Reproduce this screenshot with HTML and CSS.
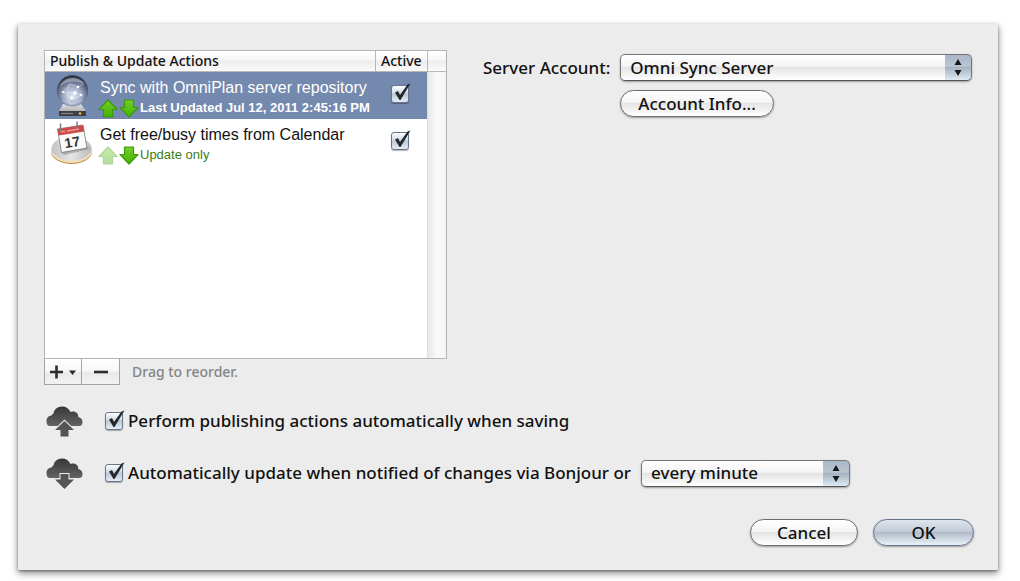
FILE: index.html
```html
<!DOCTYPE html>
<html lang="en">
<head>
<meta charset="utf-8">
<title>Publish &amp; Update Actions</title>
<link rel="stylesheet" href="styles.css">
</head>
<body>
<svg class="defs" width="0" height="0" aria-hidden="true">
  <defs>
    <linearGradient id="green" x1="0" y1="0" x2="0" y2="1"><stop offset="0" stop-color="#74d02a"/><stop offset="1" stop-color="#44b000"/></linearGradient>
    <linearGradient id="cloudfill" x1="0" y1="0" x2="0" y2="1"><stop offset="0" stop-color="#363636"/><stop offset="1" stop-color="#646464"/></linearGradient>
    <radialGradient id="globe" cx="0.5" cy="0.66" r="0.62"><stop offset="0" stop-color="#e2e8f4"/><stop offset="0.45" stop-color="#a3aec8"/><stop offset="0.8" stop-color="#59637e"/><stop offset="1" stop-color="#2b3242"/></radialGradient>
    <linearGradient id="metal" x1="0" y1="0" x2="0" y2="1"><stop offset="0" stop-color="#e0e0e0"/><stop offset="1" stop-color="#9a9a9a"/></linearGradient>
    <linearGradient id="plate" x1="0" y1="0" x2="1" y2="0"><stop offset="0" stop-color="#c4c4c6"/><stop offset="0.5" stop-color="#e4e4e6"/><stop offset="1" stop-color="#bcbcbc"/></linearGradient>
    <symbol id="up" viewBox="0 0 20 19"><path d="M10 1 L19 10.5 H14.5 V18 H5.5 V10.5 H1 Z" fill="url(#green)" stroke="#3a9a0a" stroke-width="1.2" stroke-linejoin="round"/></symbol>
    <symbol id="down" viewBox="0 0 20 19"><path d="M10 18 L19 8.5 H14.5 V1 H5.5 V8.5 H1 Z" fill="url(#green)" stroke="#3a9a0a" stroke-width="1.2" stroke-linejoin="round"/></symbol>
    <symbol id="tick" viewBox="0 0 20 20"><path d="M4 9.5 L7 8 L9 12 L16.5 1.5 L19.5 0.5 L9.5 17 H8.5 Z" fill="#26282c"/></symbol>
    <symbol id="arrows" viewBox="0 0 8 17"><path d="M4 0 L7.5 6 H0.5 Z M0.5 11 H7.5 L4 17 Z" fill="#16181c"/></symbol>
    <symbol id="cloud" viewBox="0 0 37 20"><path d="M4 20 C1.5 20 0.5 18 0.5 15 C0.5 12 2.5 9.8 5.5 9.6 C6 8.5 6.6 8 7.5 7.500 C8 3.500 11.500 0.5 16 0.5 C20 0.5 23 2.5 24.5 6 C29 4.5 32.5 7 32.3 11 C35 11.500 36.5 13.5 36.5 16 C36.5 18.5 35.5 20 33 20 Z" fill="url(#cloudfill)"/></symbol>
  </defs>
</svg>
<form class="dialog">
  <div class="columns">
    <section class="list">
      <table class="actions">
        <thead>
          <tr><th class="col-name">Publish &amp; Update Actions</th><th class="col-active">Active</th><th class="col-scroll"></th></tr>
        </thead>
        <tbody>
          <tr class="row selected">
            <td>
              <div class="action">
                <svg class="action-icon" viewBox="0 0 44 44" aria-hidden="true">
                  <path d="M14 30 H32 L37 37 V41.500 H10 V37 Z" fill="url(#metal)"/>
                  <path d="M10 37 H37 V42 H10 Z" fill="#3d3f43"/>
                  <path d="M12 39.500 H24" stroke="#888" stroke-width="1.2"/>
                  <circle cx="31" cy="39.5" r="1.3" fill="#ecc24b"/>
                  <circle cx="23.5" cy="17" r="15.7" fill="url(#globe)"/>
                  <path d="M10.500 13 C14 3 30 0 36 11 C28 6 18 6 10.500 13 Z" fill="#c5cbd6" opacity="0.55"/>
                  <g fill="none" stroke="#f2f5fc" stroke-width="0.5" opacity="0.8"><path d="M14 18 L21 10 L29 13 L34 10 M14 18 L26 19 L29 13 M26 19 L23 25 L14 18 M26 19 L33 21 L23 25 M13 26 Q23 33 33 26 M21 10 Q15 21 22 31"/></g>
                  <g fill="#fff"><circle cx="14" cy="18" r="1.1"/><circle cx="26" cy="19" r="1.7"/><circle cx="22.500" cy="24" r="1.500"/><circle cx="29" cy="13" r="1.300"/><circle cx="32" cy="21" r="1.300"/></g>
                </svg>
                <div class="action-text">
                  <span class="action-title">Sync with OmniPlan server repository</span>
                  <span class="action-status bold"><svg class="arrow"><use href="#up"/></svg><svg class="arrow"><use href="#down"/></svg>Last Updated Jul 12, 2011 2:45:16 PM</span>
                </div>
              </div>
            </td>
            <td class="cell-check"><span class="check"><input type="checkbox" checked aria-label="Sync with OmniPlan server repository active"><svg><use href="#tick"/></svg></span></td>
            <td class="track" rowspan="3"></td>
          </tr>
          <tr class="row">
            <td>
              <div class="action">
                <svg class="action-icon" viewBox="0 0 44 44" aria-hidden="true">
                  <ellipse cx="22.500" cy="30.500" rx="20.5" ry="12.5" fill="#b98b4d"/>
                  <ellipse cx="22.500" cy="29.5" rx="20.5" ry="12.5" fill="#f1dfbb"/>
                  <ellipse cx="22.500" cy="27.500" rx="20" ry="12" fill="url(#plate)"/>
                  <path d="M12 31 L38 26 L41 28 L15 34 Z" fill="#8e8e8e" opacity="0.6"/>
                  <path d="M8.500 8 L34 4 L38 27 L12.500 31.500 Z" fill="#fafafa" stroke="#777" stroke-width="0.8"/>
                  <path d="M8.500 8 L34 4 L35.200 10.500 L9.600 14.500 Z" fill="#cd4a48"/>
                  <path d="M11 10.500 H16 M18 10 L30 8" stroke="#e79a94" stroke-width="1.3"/>
                  <path d="M11.500 3 V10 M28 1 V7" stroke="#777e8a" stroke-width="1.5" stroke-linecap="round"/>
                  <text x="23" y="26" text-anchor="middle" class="day" transform="rotate(-9 23 20)">17</text>
                </svg>
                <div class="action-text">
                  <span class="action-title">Get free/busy times from Calendar</span>
                  <span class="action-status green"><svg class="arrow faded"><use href="#up"/></svg><svg class="arrow"><use href="#down"/></svg>Update only</span>
                </div>
              </div>
            </td>
            <td class="cell-check"><span class="check"><input type="checkbox" checked aria-label="Get free/busy times from Calendar active"><svg><use href="#tick"/></svg></span></td>
          </tr>
          <tr class="filler"><td colspan="2"></td></tr>
        </tbody>
      </table>
      <div class="list-tools">
        <button type="button" class="tool" aria-label="Add action"><svg width="28" height="14" viewBox="0 0 28 14"><path d="M1 7 H14 M7.500 0.500 V13.500" stroke="#2c2c2c" stroke-width="2.6"/><path d="M20 5.5 H27 L23.5 10 Z" fill="#2c2c2c"/></svg></button>
        <button type="button" class="tool" aria-label="Remove action"><svg width="14" height="14" viewBox="0 0 14 14"><path d="M0 7 H14" stroke="#2c2c2c" stroke-width="2.6"/></svg></button>
        <span class="hint">Drag to reorder.</span>
      </div>
    </section>
    <section class="account">
      <label for="server">Server Account:</label>
      <span class="popup"><select id="server"><option>Omni Sync Server</option></select><svg><use href="#arrows"/></svg></span>
      <button type="button" class="push info">Account Info...</button>
    </section>
  </div>
  <div class="option">
    <svg class="cloud" viewBox="0 0 37 31" aria-hidden="true"><use href="#cloud" width="37" height="20"/><path d="M18.5 15 L28 24 H22.5 V30.500 H14.5 V24 H9 Z" fill="#555" stroke="#ececec" stroke-width="2" paint-order="stroke"/></svg>
    <span class="check"><input type="checkbox" id="publish" checked><svg><use href="#tick"/></svg></span>
    <label for="publish">Perform publishing actions automatically when saving</label>
  </div>
  <div class="option">
    <svg class="cloud" viewBox="0 0 37 31" aria-hidden="true"><use href="#cloud" width="37" height="20"/><path d="M18.5 31 L28 21.500 H22.5 V16 H14.5 V21.500 H9 Z" fill="#555" stroke="#ececec" stroke-width="2" paint-order="stroke"/></svg>
    <span class="check"><input type="checkbox" id="update" checked><svg><use href="#tick"/></svg></span>
    <label for="update">Automatically update when notified of changes via Bonjour or</label>
    <span class="popup interval"><select aria-label="Update interval"><option>every minute</option></select><svg><use href="#arrows"/></svg></span>
  </div>
  <div class="buttons">
    <button type="button" class="push cancel">Cancel</button>
    <button type="submit" class="push ok">OK</button>
  </div>
</form>
</body>
</html>
```
FILE: styles.css
```css
* { box-sizing: border-box; }
body {
  margin: 0;
  padding: 24px 22px 10px 18px;
  background: #fff;
  color: #111;
  font: 500 17px/24px "Noto Sans", "Open Sans", sans-serif;
}
.defs { position: absolute; }
.dialog {
  padding: 26px 26px 24px;
  background: #ececec;
  box-shadow: 0 3px 7px rgba(0, 0, 0, 0.5), 0 1px 2px rgba(0, 0, 0, 0.3);
}
.columns {
  display: grid;
  grid-template-columns: 403fr 489fr;
  gap: 36px;
  margin-bottom: 17px;
}

.actions {
  width: 100%;
  height: 309px;
  border: 1px solid #b4b4b4;
  border-collapse: separate;
  border-spacing: 0;
  table-layout: fixed;
  background: #fff;
}
.actions th {
  height: 21px;
  padding: 0 5px;
  border-bottom: 1px solid #b8b8b8;
  background: linear-gradient(#fff, #f6f6f6 45%, #ececec 50%, #fbfbfb);
  font-size: 14px;
  font-weight: 500;
  line-height: 20px;
  text-align: left;
  white-space: nowrap;
}
.actions th + th { border-left: 1px solid #b8b8b8; }
.actions .col-active { width: 52px; }
.actions .col-scroll { width: 19px; padding: 0; }
.actions td { padding: 0; vertical-align: top; }
.row { height: 47px; }
.actions .track {
  border-left: 1px solid #ddd;
  background: linear-gradient(90deg, #e8e8e8, #fafafa 50%, #f4f4f4);
}
.selected td:not(.track) { background: #7489ae; color: #fff; }
.action {
  display: flex;
  gap: 7px;
  height: 47px;
  padding-left: 4px;
  font-family: "Liberation Sans", Arial, sans-serif;
  font-weight: 400;
}
.action-icon { flex: none; width: 44px; height: 44px; margin-top: 2px; }
.action-text { display: flex; flex-direction: column; padding-top: 6px; }
.action-title { font-size: 16px; line-height: 20px; white-space: nowrap; }
.action-status {
  display: flex;
  align-items: center;
  font-size: 13px;
  line-height: 20px;
  margin-left: -2px;
  white-space: nowrap;
}
.bold { font-weight: 700; }
.green { color: #3c7d12; }
.arrow { width: 20px; height: 19px; margin-right: 1px; }
.faded { opacity: 0.4; }
.day { font: 700 14px "Liberation Sans", Arial, sans-serif; fill: #333; }
.actions .cell-check { padding: 13px 16px 0; }

.check { position: relative; display: block; width: 18px; height: 18px; }
.check input {
  appearance: none;
  display: block;
  width: 18px;
  height: 18px;
  margin: 0;
  border: 1px solid #66758a;
  border-radius: 3px;
  background: linear-gradient(#fdfeff, #d0dae6 45%, #b8c6d6 50%, #e6eff7);
  box-shadow: 0 1px 1px rgba(0, 0, 0, 0.3);
}
.check svg {
  position: absolute;
  left: 0;
  top: -2px;
  width: 20px;
  height: 20px;
  pointer-events: none;
}

.list-tools { display: flex; align-items: center; }
.tool {
  display: flex;
  align-items: center;
  justify-content: center;
  width: 38px;
  height: 26px;
  padding: 0;
  border: 1px solid #a4a4a4;
  border-top: 0;
  background: linear-gradient(#fff, #f6f6f6 50%, #e9e9e9 52%, #f2f2f2);
}
.tool + .tool { border-left: 0; }
.hint { margin-left: 12px; color: #858585; font-size: 14px; }

.account {
  display: grid;
  grid-template-columns: auto 1fr;
  gap: 9px 10px;
  align-content: start;
  align-items: center;
  padding-top: 4px;
}
.account label { white-space: nowrap; }
.popup { position: relative; display: block; }
.popup select {
  appearance: none;
  display: block;
  width: 100%;
  height: 27px;
  padding: 0 36px 0 9px;
  border: 1px solid #777;
  border-bottom-color: #555;
  border-radius: 5px;
  background:
    linear-gradient(#a9b6c8, #bcc6d2 45%, #a5b2c2 50%, #dcebf3) right / 26px 100% no-repeat,
    linear-gradient(#fff, #f4f4f4 45%, #e4e4e4 50%, #fff);
  box-shadow: 0 1px 2px rgba(0, 0, 0, 0.35);
  color: #111;
  font: inherit;
}
.popup svg {
  position: absolute;
  right: 10px;
  top: 5px;
  width: 8px;
  height: 17px;
  pointer-events: none;
}
.push {
  height: 27px;
  padding: 0 17px;
  border: 1px solid #6c6c6c;
  border-radius: 14px;
  background: linear-gradient(#fff, #f5f5f5 45%, #e5e5e5 50%, #fff);
  box-shadow: 0 1px 2px rgba(0, 0, 0, 0.35);
  color: #111;
  font: inherit;
  line-height: 24px;
  white-space: nowrap;
}
.info { grid-column: 2; justify-self: start; }

.option { display: flex; align-items: center; height: 52px; padding-left: 2px; }
.columns + .option { margin-top: -7px; }
.cloud { flex: none; width: 37px; height: 31px; margin-right: 22px; }
.option .check { flex: none; margin-right: 5px; }
.option label { white-space: nowrap; }
.interval { width: 209px; margin-left: 10px; }

.buttons { display: flex; justify-content: flex-end; gap: 15px; margin: 20px -2px 0 0; }
.cancel { width: 108px; }
.ok {
  width: 101px;
  border-color: #65708a;
  background: linear-gradient(#dfe4ec, #c5ccd7 45%, #b2bcc9 50%, #e8f2f8);
}
```
